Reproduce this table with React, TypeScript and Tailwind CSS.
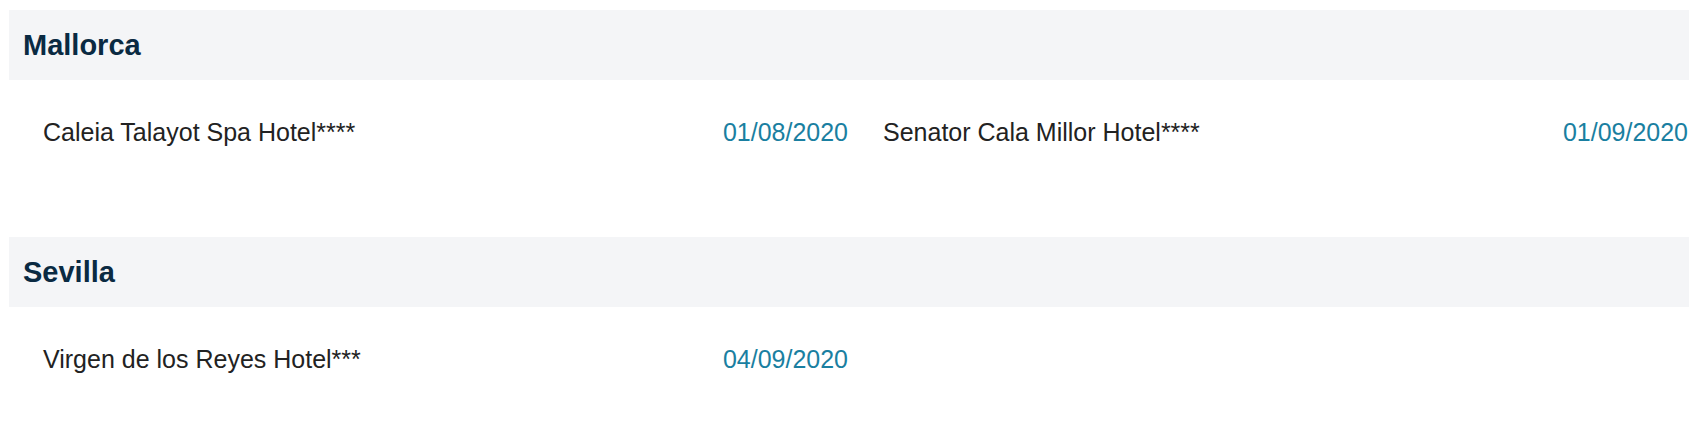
const sections = [
  {
    city: "Mallorca",
    hotels: [
      { name: "Caleia Talayot Spa Hotel****", date: "01/08/2020" },
      { name: "Senator Cala Millor Hotel****", date: "01/09/2020" },
    ],
  },
  {
    city: "Sevilla",
    hotels: [{ name: "Virgen de los Reyes Hotel***", date: "04/09/2020" }],
  },
];

export default function App() {
  return (
    <div className="min-h-screen bg-white px-[9px] pt-[10px] font-['Liberation_Sans',Arial,sans-serif] w-[1698px]">
      {sections.map((s) => (
        <div key={s.city} className="mb-[74px]">
          <div className="h-[70px] bg-[#f4f5f7] flex items-center pl-[14px]">
            <h2 className="text-[29px] font-bold text-[#0a2a42] leading-none">
              {s.city}
            </h2>
          </div>
          <div className="grid grid-cols-2 pt-[34px] pb-[13px]">
            {s.hotels.map((h) => (
              <div
                key={h.name}
                className="flex items-center justify-between pl-[34px] pr-[1px] text-[25px] leading-[36px]"
              >
                <span className="text-[#222222]">{h.name}</span>
                <span className="text-[#1a7fa1]">{h.date}</span>
              </div>
            ))}
          </div>
        </div>
      ))}
    </div>
  );
}
